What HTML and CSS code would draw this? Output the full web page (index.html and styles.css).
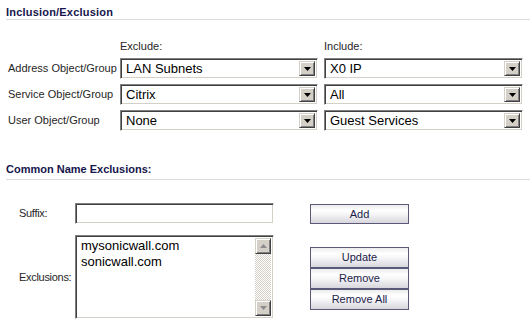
FILE: index.html
```html
<!DOCTYPE html>
<html>
<head>
<meta charset="utf-8">
<link rel="stylesheet" href="styles.css">
</head>
<body>
<h2 class="title">Inclusion/Exclusion</h2>
<div class="ie-grid">
  <div></div>
  <div class="colhead">Exclude:</div>
  <div class="colhead">Include:</div>

  <div class="lbl">Address Object/Group</div>
  <div class="sel"><span class="sel-text">LAN Subnets</span><span class="sel-btn"><svg width="7" height="4" viewBox="0 0 7 4"><path d="M0 0h7L3.5 4z" fill="#000"/></svg></span></div>
  <div class="sel"><span class="sel-text">X0 IP</span><span class="sel-btn"><svg width="7" height="4" viewBox="0 0 7 4"><path d="M0 0h7L3.5 4z" fill="#000"/></svg></span></div>

  <div class="lbl">Service Object/Group</div>
  <div class="sel"><span class="sel-text">Citrix</span><span class="sel-btn"><svg width="7" height="4" viewBox="0 0 7 4"><path d="M0 0h7L3.5 4z" fill="#000"/></svg></span></div>
  <div class="sel"><span class="sel-text">All</span><span class="sel-btn"><svg width="7" height="4" viewBox="0 0 7 4"><path d="M0 0h7L3.5 4z" fill="#000"/></svg></span></div>

  <div class="lbl">User Object/Group</div>
  <div class="sel"><span class="sel-text">None</span><span class="sel-btn"><svg width="7" height="4" viewBox="0 0 7 4"><path d="M0 0h7L3.5 4z" fill="#000"/></svg></span></div>
  <div class="sel"><span class="sel-text">Guest Services</span><span class="sel-btn"><svg width="7" height="4" viewBox="0 0 7 4"><path d="M0 0h7L3.5 4z" fill="#000"/></svg></span></div>
</div>

<h2 class="title title-2">Common Name Exclusions:</h2>
<div class="cn-grid">
  <div class="lbl lbl-cn">Suffix:</div>
  <div class="input"></div>
  <div></div>
  <div class="btn btn-add">Add</div>

  <div class="lbl lbl-cn">Exclusions:</div>
  <div class="listbox">
    <div class="list-items">
      <div>mysonicwall.com</div>
      <div>sonicwall.com</div>
    </div>
    <div class="scrollbar">
      <span class="sb-btn"><svg width="7" height="4" viewBox="0 0 7 4"><path d="M0 4h7L3.5 0z" fill="#8c8c8c"/></svg></span>
      <span class="sb-track"></span>
      <span class="sb-btn"><svg width="7" height="4" viewBox="0 0 7 4"><path d="M0 0h7L3.5 4z" fill="#8c8c8c"/></svg></span>
    </div>
  </div>
  <div></div>
  <div class="btn-stack">
    <div class="btn">Update</div>
    <div class="btn">Remove</div>
    <div class="btn">Remove All</div>
  </div>
</div>
</body>
</html>
```

FILE: styles.css
```css
* { box-sizing: border-box; }

body {
  margin: 0;
  width: 530px;
  height: 334px;
  overflow: hidden;
  background: #fff;
  font-family: "Liberation Sans", Arial, sans-serif;
  font-size: 11px;
  color: #262626;
}

.title {
  margin: 0 0 0 6px;
  padding-top: 6px;
  font-size: 11px;
  font-weight: bold;
  line-height: 13px;
  color: #16164c;
  border-bottom: 1px solid #dcdcdc;
  letter-spacing: 0.2px;
}

.title-2 {
  margin-top: 26px;
  padding-bottom: 3px;
  letter-spacing: 0;
}

.ie-grid {
  display: grid;
  grid-template-columns: 114px 198px 199px;
  column-gap: 6px;
  row-gap: 5px;
  margin-top: 20px;
}

.colhead {
  line-height: 13px;
  height: 13px;
}

.lbl {
  padding-left: 8px;
  align-self: center;
  line-height: 13px;
  white-space: nowrap;
}

.lbl-cn {
  padding-left: 19px;
  letter-spacing: -0.3px;
}

.sel {
  height: 21px;
  display: flex;
  border: 1px solid;
  border-color: #808080 #fff #fff #808080;
  box-shadow: inset 1px 1px #404040, inset -1px -1px #d4d0c8;
  padding: 2px;
  background: #fff;
}

.sel-text {
  flex: 1;
  font-size: 13px;
  line-height: 16px;
  padding-left: 3px;
  color: #000;
}

.sel-btn, .sb-btn {
  width: 16px;
  flex: none;
  display: flex;
  align-items: center;
  justify-content: center;
  background: #d4d0c8;
  border: 1px solid;
  border-color: #d4d0c8 #404040 #404040 #d4d0c8;
  box-shadow: inset 1px 1px #fff, inset -1px -1px #808080;
}

.sel-btn svg, .sb-btn svg { display: block; }

.cn-grid {
  display: grid;
  grid-template-columns: 75px 199px 36px 99px;
  row-gap: 11px;
  margin-top: 23px;
}

.input, .listbox {
  border: 1px solid;
  border-color: #808080 #fff #fff #808080;
  box-shadow: inset 1px 1px #404040, inset -1px -1px #d4d0c8;
  background: #fff;
}

.input { height: 21px; }

.listbox {
  height: 84px;
  padding: 1px;
  display: flex;
}

.list-items {
  flex: 1;
  padding: 1px 0 0 4px;
  font-size: 13px;
  line-height: 16px;
  color: #000;
}

.scrollbar {
  width: 16px;
  display: flex;
  flex-direction: column;
  margin: 1px 1px 1px 0;
}

.sb-btn { height: 16px; width: 16px; }

.sb-track {
  flex: 1;
  background: repeating-conic-gradient(#d4d0c8 0 25%, #fff 0 50%) 0 0 / 2px 2px;
}

.btn {
  height: 21px;
  width: 99px;
  border: 1px solid #5a5a78;
  background: linear-gradient(to bottom, #ececee 0%, #ffffff 30%, #f4f4f6 55%, #e3e3e8 80%, #d6d6dc 100%);
  color: #1c1c4a;
  text-align: center;
  font-size: 11px;
  line-height: 19px;
}

.btn-add {
  margin-top: 1px;
  height: 20px;
  line-height: 18px;
}

.btn-stack {
  display: flex;
  flex-direction: column;
  margin-top: 12px;
}
```
